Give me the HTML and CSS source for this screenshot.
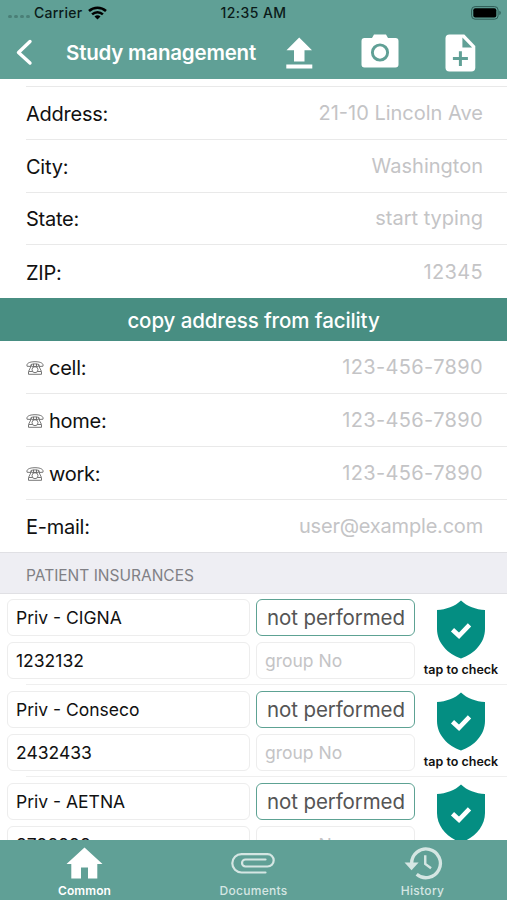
FILE: index.html
```html
<!DOCTYPE html>
<html lang="en">
<head>
<meta charset="utf-8">
<title>Study management</title>
<link rel="stylesheet" href="styles.css">
</head>
<body>
<svg class="defs" aria-hidden="true">
  <symbol id="phone" viewBox="0 0 18 14"><g fill="none" stroke="currentColor" stroke-width=".8" stroke-linejoin="round"><path d="M1 5.200C.3 2.500 3 .7 9 .7s8.700 1.800 8 4.500l-3.600.3-.4-2c-2.300-.8-5.700-.8-8 0l-.4 2z"/><path d="M5.600 4.200L2.500 10.500v2.800h13v-2.800L12.400 4.200M7.500 2.800v2.600M10.500 2.800v2.600M5.600 5.400h6.800"/><circle cx="9" cy="8.700" r="3"/><path d="M3 10.500h3.200M11.800 10.500H15"/></g></symbol>
  <symbol id="shield" viewBox="0 0 50 59"><path fill="#048e82" d="M25 .5C19 6.500 10 9.500 1 10v19c0 14 11 25 24 29.500C38 54 49 43 49 29V10C40 9.500 31 6.500 25 .5z"/><path fill="none" stroke="#fff" stroke-width="4.600" d="M16.500 29.800l6.500 6 10.500-11"/></symbol>
</svg>
<div class="app">
  <header class="top">
    <div class="status">
      <div class="carrier"><span class="dots"><i></i><i></i><i></i><i></i></span><span class="carrier-name">Carrier</span>
        <svg width="19" height="14" viewBox="0 0 19 14"><g fill="none" stroke="#000" stroke-width="2.500"><path d="M1 5C5.700.5 13.300.5 18 5"/><path d="M4.100 8.300c3.100-2.900 7.700-2.900 10.800 0"/></g><path d="M9.500 13.500L6.500 10.500c1.700-1.600 4.300-1.600 6 0z"/></svg>
      </div>
      <span class="clock">12:35 AM</span>
      <svg class="battery" width="31" height="14" viewBox="0 0 31 14"><rect x=".6" y=".6" width="26.500" height="12.600" rx="3.500" fill="none" stroke="#2e5b56" stroke-width="1"/><rect x="2.300" y="2.200" width="23" height="9.400" rx="2"/><path d="M28.400 4.800c1.800.6 1.800 3.600 0 4.200z" fill="#2e5b56"/></svg>
    </div>
    <nav class="bar">
      <svg class="back" width="17" height="27" viewBox="0 0 17 27"><path d="M14 2.500L2.500 13.500 14 24" fill="none" stroke="#fff" stroke-width="3.400" stroke-linecap="round" stroke-linejoin="round"/></svg>
      <h1>Study management</h1>
      <svg class="upload" width="27" height="32" viewBox="0 0 27 32" fill="#fff"><path d="M13.200.5L26 13.300h-7.500v11.200H8V13.300H.5zM.3 27.500h26v4H.3z"/></svg>
      <svg class="camera" width="38" height="34" viewBox="0 0 38 34"><path fill="#fff" d="M3.500 4H11l2-3.500h12L27 4h7.500Q37.500 4 37.500 7v23.500q0 3-3 3h-31q-3 0-3-3V7q0-3 3-3z"/><circle cx="19" cy="18.500" r="7.600" fill="none" stroke="#60a096" stroke-width="2.900"/></svg>
      <svg class="newdoc" width="31" height="38" viewBox="0 0 31 38"><path fill="#fff" d="M4.500.5h14.800l11 11.500v21.500q0 4-4 4H4.500q-4 0-4-4v-29q0-4 4-4z"/><path fill="#60a096" d="M17.400 3.500v10h9.700zM13.900 17.200h3v5.900h6v3h-6v6h-3v-6h-6v-3h6z"/></svg>
    </nav>
  </header>
  <main class="content">
    <div class="peek"></div>
    <section class="rows">
      <div class="row"><label>Address:</label><span class="hint">21-10 Lincoln Ave</span></div>
      <div class="row"><label>City:</label><span class="hint">Washington</span></div>
      <div class="row"><label>State:</label><span class="hint">start typing</span></div>
      <div class="row"><label>ZIP:</label><span class="hint digits">12345</span></div>
    </section>
    <button class="copy">copy address from facility</button>
    <section class="rows">
      <div class="row"><label><svg class="tel"><use href="#phone"/></svg>cell:</label><span class="hint digits">123-456-7890</span></div>
      <div class="row"><label><svg class="tel"><use href="#phone"/></svg>home:</label><span class="hint digits">123-456-7890</span></div>
      <div class="row"><label><svg class="tel"><use href="#phone"/></svg>work:</label><span class="hint digits">123-456-7890</span></div>
      <div class="row"><label>E-mail:</label><span class="hint mail">user@example.com</span></div>
    </section>
    <h2>PATIENT INSURANCES</h2>
    <section>
      <div class="policy"><div class="field">Priv - CIGNA</div><div class="field result">not performed</div><div class="field">1232132</div><div class="field group">group No</div><div class="check"><svg class="shield"><use href="#shield"/></svg><span>tap to check</span></div></div>
      <div class="policy"><div class="field">Priv - Conseco</div><div class="field result">not performed</div><div class="field">2432433</div><div class="field group">group No</div><div class="check"><svg class="shield"><use href="#shield"/></svg><span>tap to check</span></div></div>
      <div class="policy"><div class="field">Priv - AETNA</div><div class="field result">not performed</div><div class="field">8798998</div><div class="field group">group No</div><div class="check"><svg class="shield"><use href="#shield"/></svg></div></div>
    </section>
  </main>
  <footer class="tabs">
    <div class="tab active"><svg width="37" height="33" viewBox="0 0 37 33"><path fill="#fff" d="M18.500 1l18 16.500h-5.200V32H22V21h-7v11H5.300V17.500H.5z"/></svg><span>Common</span></div>
    <div class="tab"><svg width="45" height="33" viewBox="0 0 45 33"><path fill="none" stroke="currentColor" stroke-width="2.200" stroke-linecap="round" d="M34.500 26H10.500a9.200 9.200 0 0 1 0-18.400H36.500a6.200 6.200 0 0 1 0 12.400H14.500a3.500 3.500 0 0 1 0-7H34.500"/></svg><span>Documents</span></div>
    <div class="tab"><svg width="40" height="35" viewBox="0 0 40 35"><g fill="none" stroke="currentColor"><path stroke-width="3.400" d="M8.300 18A14.800 14.800 0 1 1 13.500 29.100"/><path stroke-width="2.500" d="M22.300 9.500v9l6 4.500"/></g><path fill="currentColor" d="M1 17h14.500L8.200 25z"/></svg><span>History</span></div>
  </footer>
</div>
</body>
</html>
```
FILE: styles.css
```css
* { box-sizing: border-box; }
body { margin: 0; background: #fff; color: #111; font-family: Inter, "Liberation Sans", sans-serif; }
.defs { display: none; }
.app { display: flex; flex-direction: column; width: 507px; height: 900px; overflow: hidden; }
.top { height: 79px; flex: none; background: #60a096; }
.status { display: grid; grid-template-columns: 1fr auto 1fr; height: 26px; align-items: center; padding: 0 5px 0 8px; }
.carrier { display: flex; align-items: center; color: #0b1b19; font-size: 14px; font-weight: 500; margin-top: -1px; }
.carrier-name { margin: 0 6px 0 4px; letter-spacing: .25px; }
.dots { display: flex; gap: 2px; padding-top: 7px; }
.dots i { width: 4px; height: 3px; border-radius: 2px; background: #4a7f77; }
.clock { color: #0b1b19; font-size: 14px; font-weight: 500; letter-spacing: .45px; margin: -1px 3px 0 0; }
.battery { justify-self: end; }
.bar { display: flex; align-items: center; height: 53px; padding-left: 16px; }
.bar svg { flex: none; }
h1 { width: 191px; margin: 0 29px 0 33px; font-size: 20.500px; line-height: 26px; font-weight: 600; letter-spacing: -.2px; color: #fff; white-space: nowrap; }
.upload { margin-right: 48px; }
.camera { margin-right: 46px; margin-top: -3px; }
.content { flex: 1; min-height: 0; overflow: hidden; }
.peek { height: 8px; margin-left: 26px; border-bottom: 1px solid #e9e9e9; }
.row { display: flex; justify-content: space-between; align-items: center; height: 52.800px; margin-left: 26px; padding: 2px 24px 0 0; border-bottom: 1px solid #e9e9e9; font-size: 20px; }
.row:last-child { border-bottom: 0; }
.row label { display: flex; align-items: center; letter-spacing: -.25px; }
.tel { width: 18px; height: 14px; margin-right: 5px; color: #555; }
.hint { color: #c4c4c6; margin-top: -2px; }
.digits { letter-spacing: .35px; }
.mail { letter-spacing: -.2px; }
.copy { display: block; width: 100%; height: 43px; border: 0; padding: 1px 0 0; background: #488e82; color: #fff; font: 500 20.500px Inter, sans-serif; letter-spacing: -.1px; }
h2 { height: 42px; margin: 0; padding: 3px 0 0 26px; background: #eeeef3; border-top: 1px solid #e0e0e4; border-bottom: 1px solid #e0e0e4; color: #808085; font-size: 15.500px; line-height: 40px; font-weight: 400; }
.policy { display: grid; grid-template-columns: 243px 159px 80px; grid-template-rows: 37px 37px; column-gap: 6px; row-gap: 6px; height: 91.700px; padding: 5px 0 0 7px; position: relative; }
.policy::after { content: ""; position: absolute; left: 26px; right: 0; bottom: 1px; height: 1px; background: #efefef; }
.field { border: 1px solid #ededed; border-radius: 6px; padding: 0 8px; font-size: 17.500px; line-height: 35px; white-space: nowrap; }
.field.result { border-color: #5da293; color: #555; font-size: 20.500px; letter-spacing: -.1px; padding-left: 10px; }
.field.group { color: #c4c4c6; }
.check { grid-column: 3; grid-row: 1 / 3; display: flex; flex-direction: column; align-items: center; }
.shield { width: 50px; height: 59px; margin-top: 1px; }
.check span { font-size: 12.500px; line-height: 16px; font-weight: 600; margin-top: 3px; color: #111; white-space: nowrap; }
.tabs { height: 60px; flex: none; display: grid; grid-template-columns: repeat(3, 1fr); background: #60a096; }
.tab { display: flex; flex-direction: column; align-items: center; color: #d5e6e3; padding-top: 6px; }
.tab svg { height: 34px; }
.tab span { font-size: 12px; line-height: 15px; font-weight: 500; margin-top: 3px; letter-spacing: .3px; }
.tab.active { color: #fff; }
.tab.active span { font-weight: 600; letter-spacing: .1px; }
```
